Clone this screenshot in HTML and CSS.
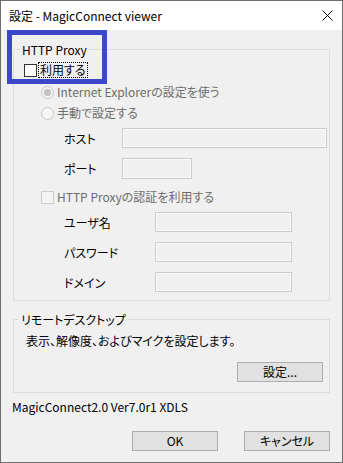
FILE: index.html
```html
<!DOCTYPE html>
<html lang="ja">
<head>
<meta charset="utf-8">
<link rel="stylesheet" href="styles.css">
</head>
<body>
<div class="window">
  <div class="titlebar">
    <span class="title">設定 - MagicConnect viewer</span>
    <svg class="close" width="11" height="11" viewBox="0 0 11 11"><path d="M0.5 0.5 L10.5 10.5 M10.5 0.5 L0.5 10.5" stroke="#000" stroke-width="1" fill="none"/></svg>
  </div>
  <div class="content">
    <fieldset class="group group-proxy">
      <legend class="legend-proxy">HTTP Proxy</legend>
      <div class="row row-use"><span class="chk"></span><span class="focus">利用する</span></div>
      <div class="row row-r1 disabled"><span class="radio checked"></span><span>Internet Explorerの設定を使う</span></div>
      <div class="row row-r2 disabled"><span class="radio"></span><span>手動で設定する</span></div>
      <div class="frow frow-host"><span class="flabel">ホスト</span><span class="input input-host"></span></div>
      <div class="frow frow-port"><span class="flabel">ポート</span><span class="input input-port"></span></div>
      <div class="row row-auth disabled"><span class="chk chk-disabled"></span><span>HTTP Proxyの認証を利用する</span></div>
      <div class="frow frow-user"><span class="flabel flabel-wide">ユーザ名</span><span class="input input-auth"></span></div>
      <div class="frow frow-pass"><span class="flabel flabel-wide">パスワード</span><span class="input input-auth"></span></div>
      <div class="frow frow-domain"><span class="flabel flabel-wide">ドメイン</span><span class="input input-auth"></span></div>
    </fieldset>
    <fieldset class="group group-rd">
      <legend class="legend-rd">リモートデスクトップ</legend>
      <div class="desc">表示、解像度、およびマイクを設定します。</div>
      <div class="rd-actions"><span class="btn">設定...</span></div>
    </fieldset>
    <div class="version">MagicConnect2.0 Ver7.0r1 XDLS</div>
    <div class="actions"><span class="btn">OK</span><span class="btn">キャンセル</span></div>
  </div>
  <div class="highlight"></div>
</div>
</body>
</html>
```
FILE: styles.css
```css
html, body {
  margin: 0;
  padding: 0;
  background: #f0f0f0;
}
body {
  font-family: "Noto Sans CJK JP", "Noto Sans", sans-serif;
  font-size: 12px;
  font-feature-settings: "palt";
  color: #000;
}
.window {
  width: 343px;
  height: 463px;
  box-sizing: border-box;
  border: 1px solid #6e6e6e;
  background: #f0f0f0;
  position: relative;
}
.titlebar {
  height: 29px;
  background: #fff;
  display: flex;
  align-items: center;
  justify-content: space-between;
  padding: 0 9px 0 8px;
}
.title {
  line-height: 16px;
  font-feature-settings: normal;
}
.close {
  display: block;
}
.content {
  padding: 11px 12px 0 12px;
}
.group {
  margin: 0;
  padding: 0;
  border: 1px solid #dcdcdc;
  min-width: 0;
}
.group legend {
  padding: 0 2px;
  height: 17px;
  line-height: 17px;
}
.legend-proxy { margin-left: 6px; }
.legend-rd { margin-left: 5px; }
.group-proxy { padding-bottom: 8px; }
.row {
  display: flex;
  align-items: center;
  height: 16px;
  line-height: 16px;
}
.disabled { color: #6d6d6d; }
.row-use { margin-top: 4px; padding-left: 10px; }
.row-r1 { margin-top: 6px; padding-left: 27px; }
.row-r2 { margin-top: 5px; padding-left: 27px; }
.row-auth { margin-top: 10px; padding-left: 27px; }
.chk {
  width: 13px;
  height: 13px;
  box-sizing: border-box;
  border: 1px solid #333;
  background: #fff;
  margin-right: 1px;
  flex: none;
}
.chk-disabled {
  border-color: #cccccc;
  background: #f4f4f4;
  margin-right: 3px;
}
.focus {
  border: 1px dotted #000;
  line-height: 14px;
  padding: 0 1px;
}
.radio {
  width: 13px;
  height: 13px;
  box-sizing: border-box;
  border-radius: 50%;
  border: 1px solid #c8c8c8;
  background: #f6f6f6;
  margin-right: 3px;
  flex: none;
}
.radio.checked {
  background: radial-gradient(circle, #c4c4c4 0 3.4px, #f4f4f4 4px);
}
.frow {
  display: flex;
  align-items: center;
  height: 20px;
  padding-left: 50px;
}
.frow-host { margin-top: 7px; }
.frow-port { margin-top: 10px; height: 21px; }
.frow-user { margin-top: 7px; }
.frow-pass { margin-top: 10px; }
.frow-domain { margin-top: 10px; }
.flabel { width: 58px; flex: none; }
.flabel-wide { width: 91px; }
.input {
  height: 100%;
  box-sizing: border-box;
  border: 1px solid #cccccc;
  box-shadow: inset 0 0 0 1px #f9f9f9;
  background: #f0f0f0;
}
.input-host { width: 205px; }
.input-port { width: 70px; }
.input-auth { width: 137px; }
.group-rd {
  margin-top: 10px;
  padding-bottom: 10px;
}
.desc {
  margin-top: 5px;
  padding-left: 12px;
  line-height: 16px;
}
.rd-actions {
  display: flex;
  justify-content: flex-end;
  margin-top: 13px;
  padding-right: 6px;
}
.btn {
  width: 86px;
  height: 20px;
  box-sizing: border-box;
  border: 1px solid #adadad;
  background: #e1e1e1;
  display: flex;
  align-items: center;
  justify-content: center;
  line-height: 16px;
}
.version {
  margin-top: 6px;
  margin-left: -1px;
  line-height: 16px;
}
.actions {
  display: flex;
  justify-content: flex-end;
  gap: 26px;
  margin-top: 16px;
}
.highlight {
  position: absolute;
  left: 6px;
  top: 29px;
  width: 100px;
  height: 54px;
  box-sizing: border-box;
  border: 5px solid #3d47c9;
}
```
